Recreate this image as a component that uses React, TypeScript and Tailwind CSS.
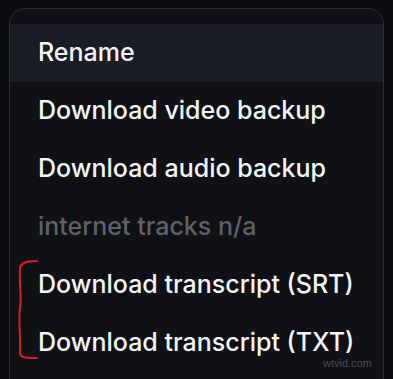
const items = [
  { label: 'Rename', active: true },
  { label: 'Download video backup' },
  { label: 'Download audio backup' },
  { label: 'internet tracks n/a', disabled: true },
  { label: 'Download transcript (SRT)' },
  { label: 'Download transcript (TXT)' },
];

export default function App() {
  return (
    <div className="relative h-[379px] w-[393px] overflow-hidden bg-[#0b0d10] px-[9px] pt-2 font-['Inter',sans-serif]">
      <div className="h-[400px] rounded-t-2xl border border-[#2a2e35] bg-[#0f1115] pt-[15px]">
        {items.map((it) => (
          <div
            key={it.label}
            className={`flex h-[58px] items-center pl-7 text-[25px] font-medium ${
              it.active ? 'bg-[#1a1d24]' : ''
            } ${it.disabled ? 'text-[#5d6168]' : 'text-[#f3f5f8]'}`}
          >
            {it.label}
          </div>
        ))}
      </div>

      <svg className="absolute left-[14px] top-[258px]" width="28" height="104" viewBox="0 0 28 104">
        <path
          d="M23 3 C14 3 7 4 6 10 C5 30 8 40 6 50 C4 65 7 80 6 95 C6 99 9 100 23 100"
          fill="none"
          stroke="#d61f2b"
          strokeWidth="2"
          strokeLinecap="round"
        />
      </svg>

      <span className="absolute left-[323px] top-[355px] text-[11px] text-[#4a4e55] font-['Liberation_Sans',sans-serif]">
        wtvid.com
      </span>
    </div>
  );
}
